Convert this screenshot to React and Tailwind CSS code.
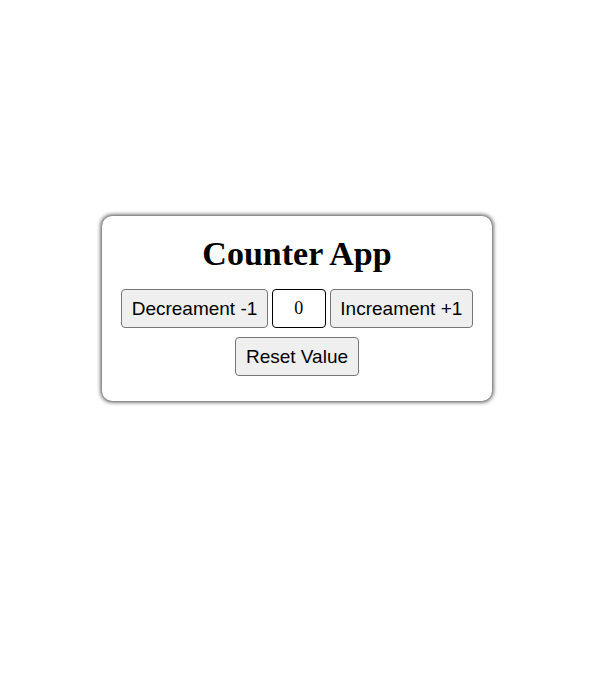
import React, { useState } from 'react';

const btn =
  "h-[39px] px-[9.5px] bg-[#efefef] border border-[#767676] rounded-[4px] text-[19px] text-black font-['Liberation_Sans',Arial,sans-serif] leading-none";

export default function App() {
  const [count, setCount] = useState(0);

  return (
    <div className="min-h-[686px] bg-white pt-[216px]">
      <div className="mx-auto w-[390px] h-[185px] rounded-[10px] bg-white shadow-[0_0_4px_1px_rgba(0,0,0,0.75)] pt-[18px] flex flex-col items-center">
        <h1 className="text-[34px] leading-[39px] font-bold text-black font-['Liberation_Serif','Times_New_Roman',serif]">
          Counter App
        </h1>
        <div className="mt-[16px] flex items-center gap-[4px]">
          <button className={btn} onClick={() => setCount(count - 1)}>
            Decreament -1
          </button>
          <input
            readOnly
            value={count}
            className="w-[54px] h-[39px] border-[1.5px] border-black rounded-[4px] text-center text-[18px] font-['Liberation_Serif',serif] outline-none"
          />
          <button className={btn} onClick={() => setCount(count + 1)}>
            Increament +1
          </button>
        </div>
        <button className={btn + " mt-[9px]"} onClick={() => setCount(0)}>
          Reset Value
        </button>
      </div>
    </div>
  );
}
